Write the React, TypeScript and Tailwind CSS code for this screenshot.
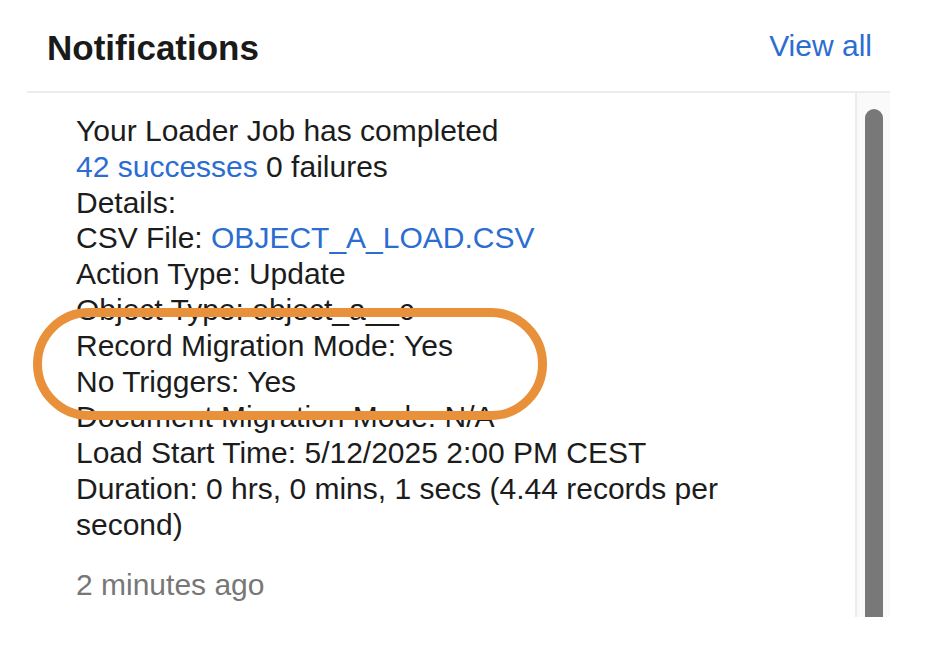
import React from "react";

const lines: React.ReactNode[] = [
  "Your Loader Job has completed",
  <>
    <span className="text-[#2c6dd2]">42 successes</span> 0 failures
  </>,
  "Details:",
  <>
    CSV File: <span className="text-[#2c6dd2]">OBJECT_A_LOAD.CSV</span>
  </>,
  "Action Type: Update",
  "Object Type: object_a__c",
  "Record Migration Mode: Yes",
  "No Triggers: Yes",
  "Document Migration Mode: N/A",
  "Load Start Time: 5/12/2025 2:00 PM CEST",
  "Duration: 0 hrs, 0 mins, 1 secs (4.44 records per second)",
];

const App = () => {
  return (
    <div
      className="relative h-[654px] w-[944px] bg-white"
      style={{ fontFamily: '"Liberation Sans", Arial, sans-serif' }}
    >
      <div className="ml-[27px] flex w-[863px] flex-col">
        <div className="flex h-[91px] items-start justify-between pl-[20px] pr-[18px] pt-[27px]">
          <h2 className="text-[35px] font-bold leading-[42px] text-[#1a1a1a]">
            Notifications
          </h2>
          <a className="mt-[1px] text-[30px] leading-[36px] text-[#2c6dd2]">
            View all
          </a>
        </div>
        <div className="flex h-[526px] border-t-2 border-[#ececec]">
          <div className="flex-1 pl-[49px] pr-[60px] pt-[20px] text-[30px] leading-[35.8px] text-[#1c1c1c]">
            {lines.map((line, key) => (
              <div key={key}>{line}</div>
            ))}
            <div className="mt-[24px] text-[#777777]">2 minutes ago</div>
          </div>
          <div className="flex w-[35px] justify-center border-l-2 border-[#ececec] bg-[#fafafa] pt-[16px]">
            <div className="w-[18px] rounded-t-full bg-[#787878]"></div>
          </div>
        </div>
      </div>
      {/* annotation ring */}
      <div className="pointer-events-none absolute left-[33px] top-[308px] h-[112px] w-[514px] rounded-full border-[9px] border-[#e8913a]"></div>
    </div>
  );
};

export default App;
